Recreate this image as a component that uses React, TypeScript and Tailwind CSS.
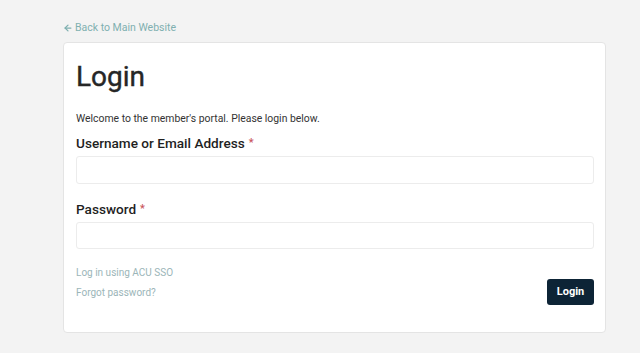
import { ArrowLeft } from 'lucide-react';

const Required = () => <span className="ml-[4px] align-top text-[11px] text-[#c9545c]">*</span>;

const App = () => {
  return (
    <div className="min-h-[353px] w-full bg-[#f3f3f3] font-['Roboto',sans-serif] text-[#222]">
      <div className="ml-[63px] w-[543px] pt-[20px]">
        <a href="#" className="flex items-center gap-[2px] text-[10.5px] text-[#7fb0b0]">
          <ArrowLeft size={10} strokeWidth={3} />
          Back to Main Website
        </a>
        <div className="mt-[6px] h-[291px] rounded border border-[#e4e4e4] bg-white pl-[12px] pr-[11px] pt-[17px]">
          <h1 className="text-[28px] font-normal leading-[34px] text-[#262626] [-webkit-text-stroke:0.4px_#262626]">
            Login
          </h1>
          <p className="mt-[18px] text-[10.4px] leading-[14px] text-[#333]">
            Welcome to the member's portal. Please login below.
          </p>
          <label className="mt-[7px] block text-[13.6px] font-medium leading-[20px] text-[#1f1f1f]">
            Username or Email Address
            <Required />
          </label>
          <input
            type="text"
            className="mt-[3px] block h-[28px] w-full rounded-[3px] border border-[#ececec] outline-none"
          />
          <label className="mt-[15px] block text-[13.6px] font-medium leading-[20px] text-[#1f1f1f]">
            Password
            <Required />
          </label>
          <input
            type="password"
            className="mt-[3px] block h-[27px] w-full rounded-[3px] border border-[#ececec] outline-none"
          />
          <div className="mt-[17px] flex items-start justify-between">
            <div className="flex flex-col gap-[6px] text-[10px] leading-[14px] text-[#9bb5b8]">
              <a href="#">Log in using ACU SSO</a>
              <a href="#">Forgot password?</a>
            </div>
            <button className="mt-[13px] h-[26px] w-[47px] rounded-[3px] bg-[#0d2436] text-[11px] font-bold text-white">
              Login
            </button>
          </div>
        </div>
      </div>
    </div>
  );
};

export default App;
